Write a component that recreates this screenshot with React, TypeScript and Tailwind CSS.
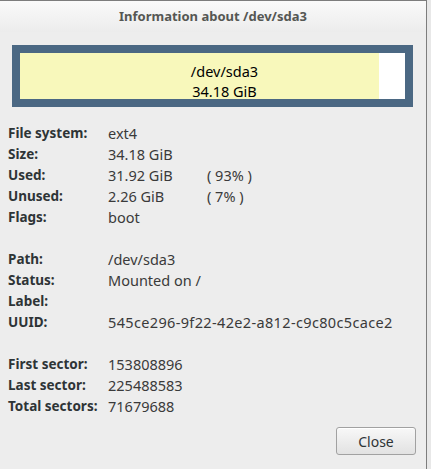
import React from "react";

const font = { fontFamily: '"Noto Sans", "Open Sans", "DejaVu Sans", sans-serif' };

function Row({ label, value, extra }: { label: string; value?: string; extra?: string }) {
  return (
    <div className="flex h-[21px] items-center whitespace-nowrap leading-[21px]">
      <div className="w-[100px] flex-none text-[13.5px] font-bold text-[#2e3436]">{label}</div>
      <div className="w-[99px] flex-none text-[14.5px] text-[#3a3a3a]">{value}</div>
      {extra && <div className="text-[14.5px] text-[#3a3a3a]">{extra}</div>}
    </div>
  );
}

export default function App() {
  return (
    <div className="flex h-[469px] w-[431px] bg-[#e8e8e8]" style={font}>
      <div className="flex h-full w-[427px] flex-col border-r border-t border-[#7d7d7d] bg-[#ededed]">
        <div className="flex h-[31px] items-center justify-center bg-gradient-to-b from-[#fafafa] to-[#ececec] text-[13px] font-bold text-[#555753]">
          Information about /dev/sda3
        </div>
        <div className="px-[12px] pt-[13px]">
          <div className="h-[62px] w-[401px] border-[8px] border-[#4b6883] bg-white">
            <div className="flex h-full w-[359px] flex-col items-center bg-[#f8f8bb] pl-[50px] text-[14.5px] leading-[19px] text-black">
              <div className="pt-[9px]">/dev/sda3</div>
              <div className="pt-[1px]">34.18 GiB</div>
            </div>
          </div>
        </div>
        <div className="flex flex-col pl-[8px] pt-[16px]">
          <Row label="File system:" value="ext4" />
          <Row label="Size:" value="34.18 GiB" />
          <Row label="Used:" value="31.92 GiB" extra="( 93% )" />
          <Row label="Unused:" value="2.26 GiB" extra="( 7% )" />
          <Row label="Flags:" value="boot" />
          <div className="h-[21px]" />
          <Row label="Path:" value="/dev/sda3" />
          <Row label="Status:" value="Mounted on /" />
          <Row label="Label:" />
          <div className="flex h-[21px] items-center whitespace-nowrap leading-[21px]">
            <div className="w-[100px] flex-none text-[13.5px] font-bold text-[#2e3436]">UUID:</div>
            <div className="flex-none text-[14.5px] tracking-[0.35px] text-[#3a3a3a]">545ce296-9f22-42e2-a812-c9c80c5cace2</div>
          </div>
          <div className="h-[21px]" />
          <Row label="First sector:" value="153808896" />
          <Row label="Last sector:" value="225488583" />
          <Row label="Total sectors:" value="71679688" />
        </div>
        <div className="flex flex-1 items-start justify-end pr-[10px] pt-[10px]">
          <button className="h-[28px] w-[80px] rounded-[3px] border border-[#a1a1a1] bg-gradient-to-b from-[#f8f8f8] to-[#e2e2e2] text-[14px] text-[#2e3436] shadow-[inset_0_1px_0_#ffffff]">
            Close
          </button>
        </div>
      </div>
    </div>
  );
}
